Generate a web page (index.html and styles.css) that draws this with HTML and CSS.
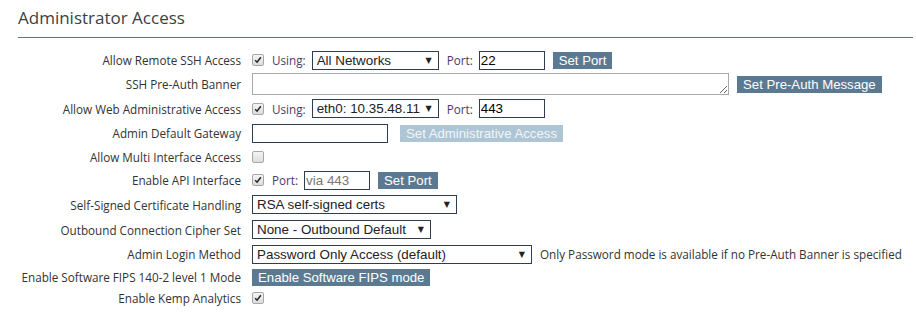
FILE: index.html
```html
<!DOCTYPE html>
<html>
<head>
<meta charset="utf-8">
<link rel="stylesheet" href="styles.css">
</head>
<body>
<div class="panel">
  <h2 class="title">Administrator Access</h2>
  <div class="form">
    <div class="row">
      <div class="label">Allow Remote SSH Access</div>
      <div class="ctrl">
        <span class="cb checked"><svg viewBox="0 0 12 12"><path d="M2.6 6.2 L4.9 8.6 L9.4 2.8" fill="none" stroke="#222" stroke-width="1.8"/></svg></span>
        <span class="sub">Using:</span>
        <span class="sel w127"><select><option>All Networks</option></select></span>
        <span class="sub">Port:</span>
        <input class="txt w66" type="text" value="22">
        <button class="btn">Set Port</button>
      </div>
    </div>
    <div class="row">
      <div class="label">SSH Pre-Auth Banner</div>
      <div class="ctrl">
        <textarea class="area"></textarea>
        <button class="btn">Set Pre-Auth Message</button>
      </div>
    </div>
    <div class="row h25">
      <div class="label">Allow Web Administrative Access</div>
      <div class="ctrl">
        <span class="cb checked"><svg viewBox="0 0 12 12"><path d="M2.6 6.2 L4.9 8.6 L9.4 2.8" fill="none" stroke="#222" stroke-width="1.8"/></svg></span>
        <span class="sub">Using:</span>
        <span class="sel w127"><select><option>eth0: 10.35.48.11</option></select></span>
        <span class="sub">Port:</span>
        <input class="txt w66" type="text" value="443">
      </div>
    </div>
    <div class="row">
      <div class="label">Admin Default Gateway</div>
      <div class="ctrl">
        <input class="txt w136" type="text">
        <button class="btn disabled gap-wide">Set Administrative Access</button>
      </div>
    </div>
    <div class="row h23">
      <div class="label">Allow Multi Interface Access</div>
      <div class="ctrl">
        <span class="cb"></span>
      </div>
    </div>
    <div class="row">
      <div class="label">Enable API Interface</div>
      <div class="ctrl">
        <span class="cb checked"><svg viewBox="0 0 12 12"><path d="M2.6 6.2 L4.9 8.6 L9.4 2.8" fill="none" stroke="#222" stroke-width="1.8"/></svg></span>
        <span class="sub">Port:</span>
        <input class="txt w66" type="text" placeholder="via 443">
        <button class="btn">Set Port</button>
      </div>
    </div>
    <div class="row h25">
      <div class="label">Self-Signed Certificate Handling</div>
      <div class="ctrl">
        <span class="sel w205"><select><option>RSA self-signed certs</option></select></span>
      </div>
    </div>
    <div class="row h25">
      <div class="label">Outbound Connection Cipher Set</div>
      <div class="ctrl">
        <span class="sel w179"><select><option>None - Outbound Default</option></select></span>
      </div>
    </div>
    <div class="row">
      <div class="label">Admin Login Method</div>
      <div class="ctrl">
        <span class="sel w280"><select><option>Password Only Access (default)</option></select></span>
        <span class="note">Only Password mode is available if no Pre-Auth Banner is specified</span>
      </div>
    </div>
    <div class="row h22">
      <div class="label">Enable Software FIPS 140-2 level 1 Mode</div>
      <div class="ctrl">
        <button class="btn">Enable Software FIPS mode</button>
      </div>
    </div>
    <div class="row h20">
      <div class="label">Enable Kemp Analytics</div>
      <div class="ctrl">
        <span class="cb checked"><svg viewBox="0 0 12 12"><path d="M2.6 6.2 L4.9 8.6 L9.4 2.8" fill="none" stroke="#222" stroke-width="1.8"/></svg></span>
      </div>
    </div>
  </div>
</div>
</body>
</html>
```

FILE: styles.css
```css
html, body {
  margin: 0;
  padding: 0;
  background: #fff;
}
body {
  font-family: "Open Sans", "Noto Sans", sans-serif;
  color: #333;
}
.panel {
  padding: 0 3px 0 18px;
}
.title {
  margin: 0;
  padding-top: 7px;
  height: 38px;
  box-sizing: border-box;
  font-size: 17px;
  font-weight: normal;
  color: #3a3f44;
  line-height: 22px;
  border-bottom: 1px solid #5f7283;
}
.form {
  margin-left: -18px;
  padding-top: 10px;
}
.row {
  display: grid;
  grid-template-columns: 241px 1fr;
  column-gap: 11px;
  height: 24px;
  align-items: center;
}
.row.h25 { height: 25px; }
.row.h23 { height: 23px; }
.row.h22 { height: 22px; }
.row.h20 { height: 20px; }
.label {
  text-align: right;
  font-size: 11.7px;
  color: #333;
  white-space: nowrap;
}
.ctrl {
  display: flex;
  align-items: center;
  gap: 8px;
}
.sub {
  font-size: 11.7px;
  color: #4b3a66;
  margin-right: -2px;
}
.cb {
  width: 12px;
  height: 12px;
  box-sizing: border-box;
  border: 1px solid #a7a7a7;
  border-radius: 2px;
  background: linear-gradient(#f4f4f4, #dcdcdc);
  display: block;
}
.cb svg {
  display: block;
  width: 10px;
  height: 10px;
}
.sel {
  position: relative;
  display: block;
  height: 19px;
}
.sel select {
  appearance: none;
  -webkit-appearance: none;
  display: block;
  width: 100%;
  height: 19px;
  box-sizing: border-box;
  border: 1px solid #2c3e50;
  border-radius: 0;
  background: #fff;
  font-family: "Liberation Sans", Arial, sans-serif;
  font-size: 13.4px;
  color: #222;
  padding: 0 0 0 4px;
  margin: 0;
  line-height: 17px;
}
.sel::after {
  content: "\25BC";
  position: absolute;
  right: 7px;
  top: 5px;
  font-size: 8px;
  line-height: 9px;
  color: #222;
  pointer-events: none;
  font-family: "DejaVu Sans", sans-serif;
}
.w127 { width: 127px; }
.w205 { width: 205px; }
.w179 { width: 179px; }
.w280 { width: 280px; }
.txt {
  display: block;
  height: 19px;
  box-sizing: border-box;
  border: 1px solid #2c3e50;
  border-radius: 0;
  padding: 0 1px;
  margin: 0;
  font-family: "Liberation Sans", Arial, sans-serif;
  font-size: 13.4px;
  color: #000;
  outline: none;
}
.txt::placeholder {
  color: #777;
}
.w66 { width: 66px; }
.w136 { width: 136px; }
.area {
  display: block;
  width: 477px;
  height: 22px;
  box-sizing: border-box;
  border: 1px solid #a9a9a9;
  margin: 0;
  padding: 0;
  resize: both;
  font-family: "Liberation Sans", Arial, sans-serif;
}
.btn {
  display: block;
  height: 17px;
  box-sizing: border-box;
  border: 0;
  border-radius: 0;
  margin: 0;
  padding: 0 6px;
  background: #5b7a92;
  color: #fff;
  font-family: "Liberation Sans", Arial, sans-serif;
  font-size: 13.2px;
  line-height: 17px;
  white-space: nowrap;
}
.btn.disabled {
  background: #adc5d5;
  color: #f2f6f8;
}
.btn.gap-wide {
  margin-left: 4px;
}
.note {
  font-size: 11.7px;
  color: #333;
  white-space: nowrap;
}
```
